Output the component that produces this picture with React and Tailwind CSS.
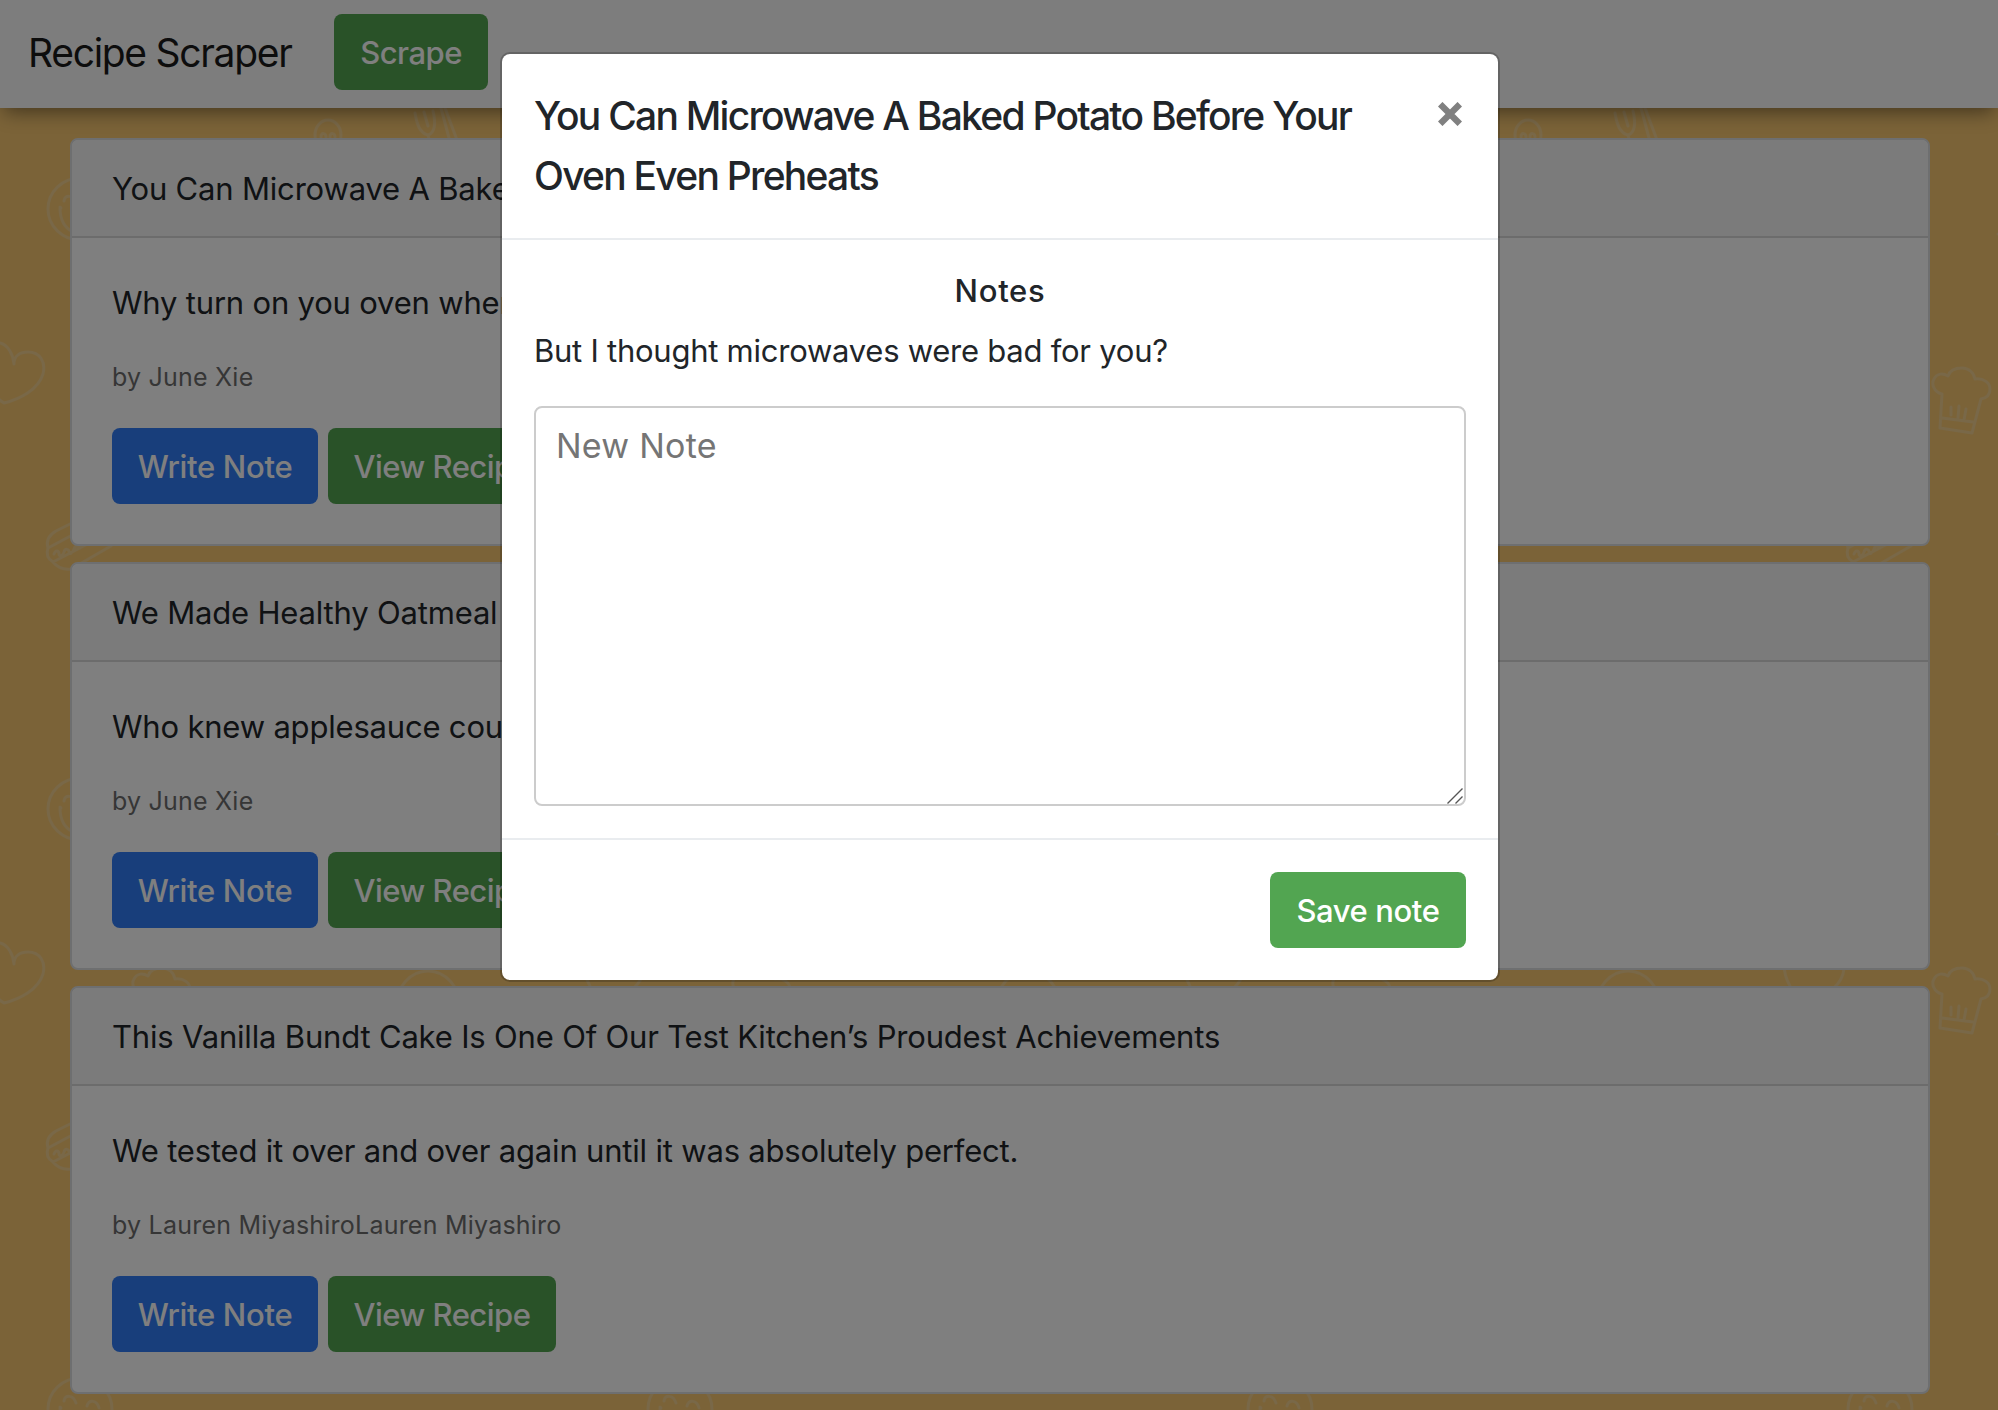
import React from "react";

const recipes = [
  {
    title: "You Can Microwave A Baked Potato Before Your Oven Even Preheats",
    text: "Why turn on you oven when you don’t have to?",
    author: "June Xie",
  },
  {
    title: "We Made Healthy Oatmeal Cookies",
    text: "Who knew applesauce could do that?",
    author: "June Xie",
  },
  {
    title: "This Vanilla Bundt Cake Is One Of Our Test Kitchen’s Proudest Achievements",
    text: "We tested it over and over again until it was absolutely perfect.",
    author: "Lauren MiyashiroLauren Miyashiro",
  },
];

function KitchenPattern() {
  return (
    <svg className="absolute inset-0 h-full w-full" aria-hidden="true">
      <defs>
        <pattern id="kitchen" width="600" height="600" patternUnits="userSpaceOnUse">
          <g
            fill="none"
            stroke="#f2d090"
            strokeWidth="3"
            strokeLinecap="round"
            strokeLinejoin="round"
          >
            {/* smiling face */}
            <ellipse cx="80" cy="209" rx="32" ry="31" />
            <path d="M64 201c1-6 9-7 12 2M87 206c2-7 10-6 12 2M60 208c0 12 5 20 13 24M60 207l1 1" />
            {/* hearts */}
            <path d="M14 364c0-8 6-12 14-12 12 0 18 10 15 22-5 16-23 25-39 29-12-7-20-23-20-39 0-12 7-21 16-21 8 2 13 11 14 21Z" />
            <path d="M584 364c0 8 2 15 6 22" />
            <path d="M46 654c-2-7-8-11-16-10-10 1-15 10-13 19 3 14 21 28 39 32 12-11 22-27 20-45-2-10-8-14-15-14-8 1-14 9-15 18Z" />
            {/* sandwich */}
            <path d="M74 522 56 531c-7 4-10 10-8 17l30-16M48 548c-2 6 0 11 5 14l44-23M54 554c2-5 5-3 5 0s4 2 5-2 5-3 5 0 4 1 5-3 4-3 6-1M53 562c5 6 11 8 18 7l40-23" />
            {/* chef hat */}
            <path d="M142 394c-8-2-11-10-8-15 3-6 9-6 14-3 2-6 8-8 14-8 7 0 12 5 13 11 9-1 15 4 15 10s-3 9-9 10l-9 34-32-5 2-34M142 418l31 4M151 407v8M159 406l-1 12M166 409l-2 11" />
            {/* egg */}
            <ellipse cx="428" cy="407" rx="32" ry="36" />
            {/* teapot */}
            <path d="M163 661c7 3 2 12 11 17M180 664c-6 6-7 16-3 24h38c5-8 5-18 0-24h-35c3-4 7-6 12-7 9 1 16 3 19 7M168 694h58M174 694l1 4" />
            <circle cx="194" cy="652" r="4" />
            <path d="M198 234h2" />
            {/* spoon, fork and knife */}
            <ellipse cx="328" cy="135" rx="13" ry="15" />
            <path d="M321 137c0-5 5-4 5 0M330 137c0-5 5-4 5 0" />
            <path d="M415 113c2 12 5 20 13 22 7-2 8-12 5-24M424 112l4 14M428 135l3 12M441 108l8 30M445 108l12 32" />
          </g>
        </pattern>
      </defs>
      <rect width="100%" height="100%" fill="url(#kitchen)" />
    </svg>
  );
}

function Button({ className, children }) {
  return (
    <button
      className={`flex h-[76px] items-center justify-center rounded-lg pt-0.5 text-[31px] leading-[48px] font-medium whitespace-nowrap text-white ${className}`}
    >
      {children}
    </button>
  );
}

function RecipeCard({ title, text, author }) {
  return (
    <article className="overflow-hidden rounded-lg border-2 border-[#dcdee1] bg-white">
      <h2 className="border-b-2 border-[#d9d9d9] bg-[#f7f7f7] px-10 pt-[25px] pb-[23px] text-[31px] leading-[48px] tracking-[-0.18px] whitespace-nowrap">
        {title}
      </h2>
      <div className="px-10 pt-[41px] pb-10">
        <p className="text-[31px] leading-[48px] tracking-[-0.19px] whitespace-nowrap">{text}</p>
        <p className="mt-[26px] text-[25px] leading-[48px] tracking-[0.22px] text-[#6c6c6c]">
          by {author}
        </p>
        <div className="mt-[27px] flex gap-2.5">
          <Button className="w-[206px] bg-[#307cf6] tracking-[-0.3px]">Write Note</Button>
          <Button className="w-[228px] bg-[#52a551] tracking-[-0.5px]">View Recipe</Button>
        </div>
      </div>
    </article>
  );
}

function NoteModal() {
  return (
    <div className="absolute inset-0 bg-black/50">
      <section className="mx-auto mt-[52px] w-[1000px] translate-x-px rounded-[10px] border-2 border-black/20 bg-white bg-clip-padding">
        <header className="flex items-start justify-between border-b-2 border-[#e9ecef] p-8">
          <h3 className="w-[860px] text-[39px] leading-[60px] font-medium tracking-[-1.75px]">
            You Can Microwave A Baked Potato Before Your
            <br />
            Oven Even Preheats
          </h3>
          <button className="mt-4 mr-1 h-6 w-6" aria-label="Close">
            <svg viewBox="0 0 24 24" className="h-6 w-6" stroke="#808080" strokeWidth="6.4">
              <path d="M2.2 2.2 21.8 21.8M21.8 2.2 2.2 21.8" />
            </svg>
          </button>
        </header>
        <div className="p-8">
          <h4 className="text-center text-[31px] leading-[38px] font-medium tracking-[0.7px]">
            Notes
          </h4>
          <p className="mt-[17px] text-[31px] leading-[48px] tracking-[-0.25px]">
            But I thought microwaves were bad for you?
          </p>
          <div className="relative mt-[31px]">
            <textarea
              placeholder="New Note"
              className="block h-[400px] w-full resize-none rounded-lg border-2 border-[#cccccc] px-5 py-[13px] text-[34px] leading-[50px] tracking-[0.25px] placeholder:text-[#757575]"
            />
            <svg
              viewBox="0 0 16 16"
              className="absolute right-[3px] bottom-[2px] h-4 w-4"
              stroke="#555555"
              strokeWidth="1.4"
            >
              <path d="M0.5 15.5 15.5 0.5M8.5 15.5 15.5 8.5" />
            </svg>
          </div>
        </div>
        <footer className="flex justify-end border-t-2 border-[#e9ecef] p-8">
          <Button className="w-[196px] bg-[#52a551] tracking-[-0.4px]">Save note</Button>
        </footer>
      </section>
    </div>
  );
}

export default function App() {
  return (
    <div className="relative h-[1410px] w-full overflow-hidden bg-[#f6c670] font-['Inter',sans-serif] text-[#212529]">
      <KitchenPattern />
      <div className="relative">
        <nav className="flex h-[108px] items-center bg-[#fbfbfb] pl-7 shadow-[0_8px_18px_-4px_rgba(0,0,0,0.45)]">
          <span className="w-[306px] pb-[3px] text-[39px] leading-[60px] tracking-[-1.3px] text-[#1a1a1a]">
            Recipe Scraper
          </span>
          <Button className="mb-1 w-[154px] bg-[#52a551] tracking-[-0.5px]">Scrape</Button>
        </nav>
        <main className="mt-[30px] flex flex-col gap-4 pr-[68px] pl-[70px]">
          {recipes.map((recipe) => (
            <RecipeCard key={recipe.title} {...recipe} />
          ))}
        </main>
      </div>
      <NoteModal />
    </div>
  );
}
